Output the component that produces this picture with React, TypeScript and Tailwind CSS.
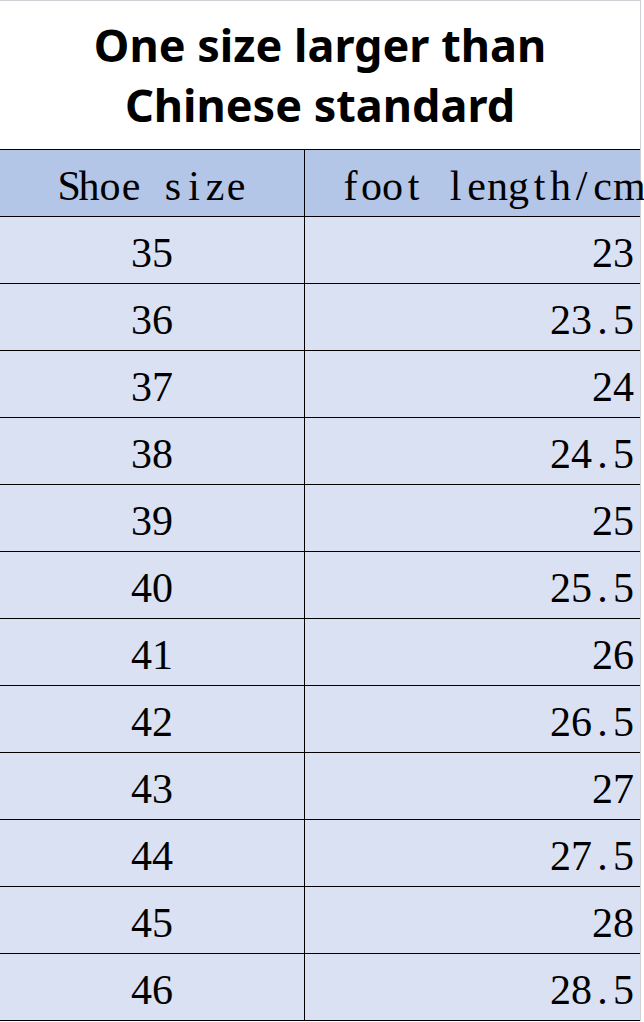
import React from "react";

const rows: [string, string][] = [
  ["35", "23"],
  ["36", "23.5"],
  ["37", "24"],
  ["38", "24.5"],
  ["39", "25"],
  ["40", "25.5"],
  ["41", "26"],
  ["42", "26.5"],
  ["43", "27"],
  ["44", "27.5"],
  ["45", "28"],
  ["46", "28.5"],
];

// half-width cells so the serif text keeps the fixed pitch of the original sheet font
function Mono({ text }: { text: string }) {
  return (
    <>
      {text.split("").map((ch, i) => (
        <span key={i} className="inline-block w-[21px] text-center">
          {ch === " " ? "\u00a0" : ch}
        </span>
      ))}
    </>
  );
}

function Row({ left, right, head }: { left: string; right: string; head?: boolean }) {
  const bg = head ? "bg-[#b4c6e7]" : "bg-[#d9e1f2]";
  return (
    <div className={`flex border-t border-black ${bg}`}>
      <div className="w-[305px] h-[66px] border-r border-black pt-[6px] leading-[60px] text-center whitespace-nowrap">
        <Mono text={left} />
      </div>
      <div className="flex-1 h-[66px] pt-[6px] pr-[6px] leading-[60px] text-right whitespace-nowrap">
        <Mono text={right} />
      </div>
    </div>
  );
}

export default function App() {
  return (
    <div className="w-[644px] h-[1022px] bg-white">
      <div className="w-[641px] border-r border-[#cfcfd6]">
        <div className="h-[149px] border-t border-[#cfcfd6] pt-[14px] text-center font-bold text-[45px] leading-[60px] text-black font-['Noto_Sans',sans-serif]">
          One size larger than
          <br />
          Chinese standard
        </div>
        <div className="font-['Liberation_Serif',serif] text-[42px] text-black border-b border-black">
          <Row left="Shoe size" right="foot length/cm" head />
          {rows.map(([s, l]) => (
            <Row key={s} left={s} right={l} />
          ))}
        </div>
      </div>
    </div>
  );
}
